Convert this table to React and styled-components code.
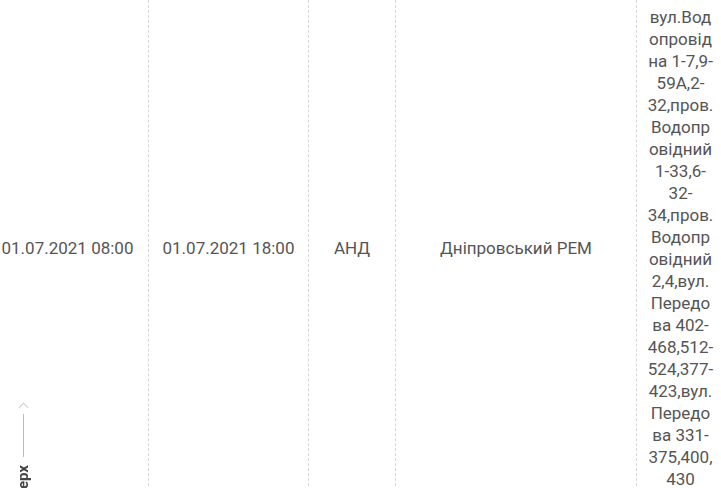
import React from 'react';
import styled, { createGlobalStyle } from 'styled-components';

const GlobalStyle = createGlobalStyle`
  html, body {
    margin: 0;
    padding: 0;
    background: #fff;
    overflow: hidden;
  }
  body {
    font-family: Roboto, "Liberation Sans", Arial, sans-serif;
  }
`;

const Table = styled.div`
  display: flex;
  margin-left: -13px;
  color: #555;
  font-size: 17px;
  line-height: 22px;
`;

const Cell = styled.div`
  flex: none;
  width: ${(p) => p.w}px;
  box-sizing: border-box;
  padding: 6px ${(p) => (p.pad ? p.pad : 0)}px;
  display: flex;
  align-items: center;
  justify-content: center;
  text-align: center;
  overflow-wrap: anywhere;
  border-left: ${(p) => (p.first ? 'none' : '1px dashed #d6d6d6')};
`;

const ScrollTop = styled.a`
  position: fixed;
  left: 16px;
  top: 404px;
  display: flex;
  flex-direction: column;
  align-items: center;
  color: #444;
  text-decoration: none;
  cursor: pointer;
`;

const Chevron = styled.span`
  width: 6px;
  height: 6px;
  border-left: 1px solid #ccc;
  border-top: 1px solid #ccc;
  transform: rotate(45deg);
  margin-bottom: 3px;
`;

const Line = styled.span`
  width: 1px;
  height: 43px;
  background: #bbb;
  margin-bottom: 8px;
`;

const Label = styled.span`
  writing-mode: vertical-rl;
  transform: rotate(180deg);
  font-size: 15px;
  line-height: 15px;
  font-weight: 700;
`;

const address =
  'вул.Водопровідна 1-7,9-59А,2-32,пров.Водопровідний 1-33,6-32-34,пров.Водопровідний 2,4,вул.Передова 402-468,512-524,377-423,вул.Передова 331-375,400,430';

export default function App() {
  return (
    <>
      <GlobalStyle />
      <Table>
        <Cell w={161} first>01.07.2021 08:00</Cell>
        <Cell w={160}>01.07.2021 18:00</Cell>
        <Cell w={87}>АНД</Cell>
        <Cell w={241}>Дніпровський РЕМ</Cell>
        <Cell w={88} pad={10}>{address}</Cell>
      </Table>
      <ScrollTop>
        <Chevron />
        <Line />
        <Label>Наверх</Label>
      </ScrollTop>
    </>
  );
}
